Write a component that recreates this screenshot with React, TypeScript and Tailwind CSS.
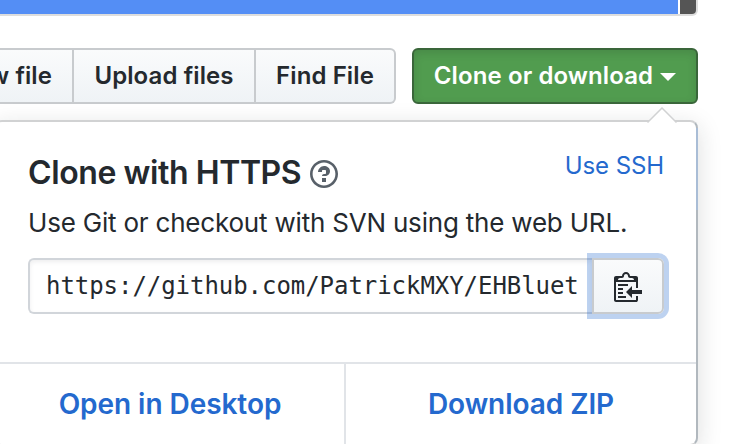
import type { ReactNode } from "react";

function QuestionIcon() {
  return (
    <svg width="28" height="32" viewBox="0 0 14 16" fill="#586069" className="shrink-0">
      <path d="M6 10h2v2H6v-2zm4-3.5C10 8.64 8 9 8 9H6c0-.55.45-1 1-1h.5c.28 0 .5-.22.5-.5v-1c0-.28-.22-.5-.5-.5h-1c-.28 0-.5.22-.5.5V7H4c0-1.5 1.5-3 3-3s3 1 3 2.5zM7 2.3c3.14 0 5.7 2.56 5.7 5.7s-2.56 5.7-5.7 5.7A5.71 5.71 0 0 1 1.3 8c0-3.14 2.56-5.7 5.7-5.7zM7 1C3.14 1 0 4.14 0 8s3.14 7 7 7 7-3.14 7-7-3.14-7-7-7z" />
    </svg>
  );
}

function ClippyIcon() {
  return (
    <svg width="28" height="32" viewBox="0 0 14 16" fill="#24292e" className="shrink-0">
      <path
        fillRule="evenodd"
        d="M2 13h4v1H2v-1zm5-6H2v1h5V7zm2 3V8l-3 3 3 3v-2h5v-2H9zM4.5 9H2v1h2.5V9zM2 12h2.5v-1H2v1zm9 1h1v2c-.02.28-.11.52-.3.7-.19.18-.42.28-.7.3H1c-.55 0-1-.45-1-1V4c0-.55.45-1 1-1h3c0-1.11.89-2 2-2 1.11 0 2 .89 2 2h3c.55 0 1 .45 1 1v5h-1V6H1v9h10v-2zM2 5h8c0-.55-.45-1-1-1H8c-.55 0-1-.45-1-1s-.45-1-1-1-1 .45-1 1-.45 1-1 1H3c-.55 0-1 .45-1 1z"
      />
    </svg>
  );
}

function GroupButton({ className, children }: { className: string; children: ReactNode }) {
  return (
    <button
      className={`flex h-14 shrink-0 items-center border-y-2 border-r-2 border-[#c8cbce] bg-linear-to-b from-[#fafbfc] to-[#eff3f6] text-2xl leading-[50px] font-semibold tracking-[0.1px] whitespace-nowrap text-[#24292e] ${className}`}
    >
      {children}
    </button>
  );
}

export default function App() {
  return (
    <div className="relative h-[444px] w-[730px] overflow-hidden bg-white font-['Inter',sans-serif] text-[#24292e]">
      <div className="flex h-4 w-[698px] gap-0.5 overflow-hidden rounded-br-md border-r-2 border-b-2 border-[#ddd]">
        <div className="flex-1 bg-[#548ef5]" />
        <div className="w-4 bg-[#555]" />
      </div>

      <div className="mt-8 flex w-[698px]">
        <GroupButton className="w-[74px] justify-end pr-5">New file</GroupButton>
        <GroupButton className="w-[182px] justify-center">Upload files</GroupButton>
        <GroupButton className="w-[140px] justify-center rounded-r-md">Find File</GroupButton>
        <button className="ml-4 flex h-14 w-[286px] items-center justify-center gap-[7px] rounded-md border-2 border-[#3a663a] bg-[#519c4f] text-2xl font-semibold tracking-[0.1px] whitespace-nowrap text-white shadow-[inset_0_3px_8px_rgba(27,31,35,0.15)]">
          <span className="leading-[50px]">Clone or download</span>
          <span className="mt-0.5 border-x-8 border-t-8 border-x-transparent border-t-white" />
        </button>
      </div>

      <div className="absolute top-[120px] -left-1.5 h-[326px] w-[704px] rounded-lg border-2 border-[#d1d2d3] border-r-[#b1b8be] bg-white shadow-[0_6px_24px_rgba(27,31,35,0.15)]">
        <span className="absolute top-1.5 -right-0.5 h-[82px] w-0.5 bg-[#a9bdd6]" />
        <svg className="absolute -top-[15px] right-[19px]" width="30" height="16" viewBox="0 0 30 16">
          <path d="M0 16 15 1l15 15z" fill="#fff" />
          <path d="M0.5 15.5 15 1l14.5 14.5" fill="none" stroke="#d1d2d3" strokeWidth="1.5" />
        </svg>
        <div className="h-60 px-8 pt-[33px]">
          <div className="flex h-9 items-center">
            <h4 className="text-[32px] leading-9 font-semibold tracking-[-0.41px] whitespace-nowrap">Clone with HTTPS</h4>
            <span className="ml-[9px] pt-0.5">
              <QuestionIcon />
            </span>
            <a className="-mt-3.5 ml-auto text-2xl leading-9 tracking-[-0.1px] whitespace-nowrap text-[#2469ce]">Use SSH</a>
          </div>
          <p className="mt-3 h-10 text-[26px] leading-10 tracking-[-0.2px] whitespace-nowrap">
            Use Git or checkout with SVN using the web URL.
          </p>
          <div className="mt-[15px] flex h-14">
            <div className="flex-1 rounded-l-md border-y-2 border-l-2 border-[#d1d5da] pl-4 shadow-[inset_0_2px_4px_rgba(27,31,35,0.075)]">
              <div className="font-['DejaVu_Sans_Mono',monospace] text-2xl leading-[52px] tracking-[-0.05px] whitespace-nowrap">
                https://github.com/PatrickMXY/EHBluet
              </div>
            </div>
            <button className="flex w-[72px] shrink-0 items-center justify-center rounded-r-md border-2 border-[#c8cbce] bg-linear-to-b from-[#fafbfc] to-[#eff3f6] shadow-[0_0_0_5px_rgba(36,105,206,0.3)]">
              <ClippyIcon />
            </button>
          </div>
        </div>
        <div className="grid h-[82px] grid-cols-2 border-t-2 border-[#e1e4e8] text-center text-[28px] leading-[80px] font-semibold tracking-[-0.05px] text-[#2469ce]">
          <a className="border-r-2 border-[#e1e4e8]">Open in Desktop</a>
          <a>Download ZIP</a>
        </div>
      </div>
    </div>
  );
}
